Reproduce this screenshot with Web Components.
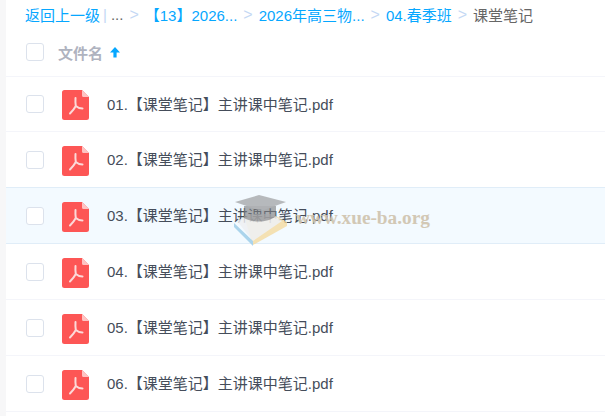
<!DOCTYPE html>
<html>
<head>
<meta charset="utf-8">
<style>
    html, body { margin: 0; padding: 0; height: 100%; overflow: hidden; background: #f7f7f8; }
    body { font-family: "Liberation Sans", "Noto Sans CJK SC", sans-serif; }
</style>
</head>
<body>
<file-panel>
    <bread-crumbs></bread-crumbs>
    <list-head></list-head>
    <file-row first name="01.【课堂笔记】主讲课中笔记.pdf"></file-row>
    <file-row name="02.【课堂笔记】主讲课中笔记.pdf"></file-row>
    <file-row name="03.【课堂笔记】主讲课中笔记.pdf" active></file-row>
    <file-row name="04.【课堂笔记】主讲课中笔记.pdf"></file-row>
    <file-row name="05.【课堂笔记】主讲课中笔记.pdf"></file-row>
    <file-row name="06.【课堂笔记】主讲课中笔记.pdf"></file-row>
</file-panel>
<water-mark></water-mark>

<script>
class FilePanel extends HTMLElement {
    constructor() {
        super();
        this.attachShadow({ mode: 'open' });
        this.shadowRoot.innerHTML = `
            <style>
                :host {
                    display: block;
                    margin-left: 6px;
                    height: 416px;
                    background: #fff;
                    overflow: hidden;
                }
            </style>
            <slot></slot>
        `;
    }
}

class BreadCrumbs extends HTMLElement {
    constructor() {
        super();
        this.attachShadow({ mode: 'open' });
        this.shadowRoot.innerHTML = `
            <style>
                :host {
                    display: flex;
                    align-items: center;
                    height: 29px;
                    padding: 0 0 1px 19px;
                    font-size: 15px;
                    color: #06a7ff;
                    white-space: nowrap;
                }
                .bar { color: #c4d8f4; margin: 0 4px 0 3px; }
                .dots { color: #666; }
                .sep { color: #c4d8f4; margin: 0 6px; font-size: 16px; }
                .cur { color: #666; }
            </style>
            <span>返回上一级</span><span class="bar">|</span><span class="dots">...</span>
            <span class="sep">&gt;</span><span>【13】2026...</span>
            <span class="sep">&gt;</span><span>2026年高三物...</span>
            <span class="sep">&gt;</span><span>04.春季班</span>
            <span class="sep">&gt;</span><span class="cur">课堂笔记</span>
        `;
    }
}

class ListHead extends HTMLElement {
    constructor() {
        super();
        this.attachShadow({ mode: 'open' });
        this.shadowRoot.innerHTML = `
            <style>
                :host {
                    display: flex;
                    align-items: center;
                    box-sizing: border-box;
                    height: 47px;
                    padding: 0 0 2px 20px;
                    border-bottom: 1px solid #f4f5fa;
                    font-size: 15px;
                    font-weight: bold;
                    color: #afb3bf;
                }
                .box {
                    box-sizing: border-box;
                    width: 18px;
                    height: 18px;
                    border: 1px solid #dce2ec;
                    border-radius: 3px;
                    background: #fff;
                    margin-right: 14px;
                }
                svg { margin-left: 7px; }
            </style>
            <span class="box"></span>
            <span>文件名</span>
            <svg width="10" height="12" viewBox="0 0 10 12"><path d="M5 1 L10 6.5 H6.6 V11.5 H3.4 V6.5 H0 Z" fill="#06a7ff"/></svg>
        `;
    }
}

class FileRow extends HTMLElement {
    constructor() {
        super();
        this.attachShadow({ mode: 'open' });
        this.shadowRoot.innerHTML = `
            <style>
                :host {
                    display: flex;
                    align-items: center;
                    box-sizing: border-box;
                    height: 56px;
                    padding-left: 20px;
                    border-bottom: 1px solid #f4f5fa;
                    font-size: 15px;
                    color: #454d5a;
                    white-space: nowrap;
                }
                :host([first]) { height: 55px; }
                :host([active]) {
                    background: #f3faff;
                    border-top: 1px solid #e0edf8;
                    border-bottom-color: #e0edf8;
                    margin-top: -1px;
                    height: 57px;
                }
                .box {
                    box-sizing: border-box;
                    width: 18px;
                    height: 18px;
                    border: 1px solid #dce2ec;
                    border-radius: 3px;
                    background: #fff;
                    margin-right: 18px;
                }
                svg { margin: 2px 18px 0 0; flex: none; }
                .name { margin-bottom: 2px; }
            </style>
            <span class="box"></span>
            <svg width="27" height="30" viewBox="0 0 27 30">
                <path d="M2.5 0 H20 L27 7 V27.5 A2.5 2.5 0 0 1 24.5 30 H2.5 A2.5 2.5 0 0 1 0 27.5 V2.5 A2.5 2.5 0 0 1 2.5 0 Z" fill="#fd5655"/>
                <path d="M20 0 L27 7 H21.5 A1.5 1.5 0 0 1 20 5.5 Z" fill="#fec4c3"/>
                <path d="M13.5 8 C13.2 12 13.6 14.5 13.8 16 M8 23.5 C10 21.5 12.5 18.5 13.8 16 M20.5 18.5 C18 18.5 15.5 17.5 13.8 16" fill="none" stroke="#fcd9d8" stroke-width="2" stroke-linecap="round"/>
            </svg>
            <span class="name"></span>
        `;
        this.shadowRoot.querySelector('.name').textContent = this.getAttribute('name');
    }
}

// site watermark that sits on top of the list
class WaterMark extends HTMLElement {
    constructor() {
        super();
        this.attachShadow({ mode: 'open' });
        this.shadowRoot.innerHTML = `
            <style>
                :host {
                    position: absolute;
                    left: 234px;
                    top: 194px;
                    display: block;
                    width: 54px;
                    height: 53px;
                    opacity: .9;
                    pointer-events: none;
                }
                .txt {
                    position: absolute;
                    left: 62px;
                    top: 13px;
                    font: bold 19.3px "Liberation Serif", serif;
                    color: #cfc3ad;
                    white-space: nowrap;
                }
            </style>
            <svg width="54" height="53" viewBox="0 0 54 53">
                <path d="M19 51 L53 32 V28 L42 22 H10 Z" fill="#f5d99c" opacity=".85"/>
                <path d="M0 29 L19 47 L19 52 L0 33 Z" fill="#a4d0ea"/>
                <path d="M3 27 L17 20 H38 L48 27 L19 47 Z" fill="#eef0f2" opacity=".9"/>
                <path d="M10 12 V24 C18 29 34 29 42 22 V12 Z" fill="#7d7f82" opacity=".7"/>
                <path d="M1 8 L25 1 L52 8 L27 17 Z" fill="#a9abad" opacity=".9"/>
            </svg>
            <span class="txt">www.xue-ba.org</span>
        `;
    }
}

customElements.define('file-panel', FilePanel);
customElements.define('bread-crumbs', BreadCrumbs);
customElements.define('list-head', ListHead);
customElements.define('file-row', FileRow);
customElements.define('water-mark', WaterMark);
</script>
</body>
</html>
